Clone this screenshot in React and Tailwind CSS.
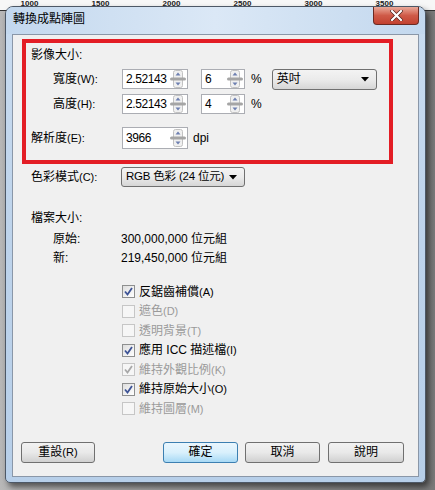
import React from 'react';

const FONT = "font-[family-name:'Liberation_Sans','Noto_Sans_CJK_TC',sans-serif]";

function Spinner() {
  return (
    <svg width="16" height="18" viewBox="0 0 16 18" className="shrink-0">
      <rect x="3.5" y="0.5" width="9" height="17" rx="2" fill="#f0f0f0" stroke="#c2c2c2" />
      <rect x="0" y="7.5" width="16" height="3" rx="1.5" fill="#a5a5a5" />
      <path d="M8 2.5 L10.5 5.5 H5.5 Z" fill="#6d7fb0" />
      <path d="M8 15.5 L10.5 12.5 H5.5 Z" fill="#6d7fb0" />
    </svg>
  );
}

function NumBox({ value, width }) {
  return (
    <div className={`flex items-center justify-between bg-white border border-[#abadb3] h-full pl-[3px] pr-[1px] ${width}`}>
      <span className="text-[12px] tracking-[-0.4px] leading-none text-black">{value}</span>
      <Spinner />
    </div>
  );
}

function DropDown({ value, width, tight }) {
  return (
    <div className={`flex items-center justify-between h-full border border-[#707070] rounded-[3px] bg-gradient-to-b from-[#f3f3f3] via-[#ebebeb] to-[#d6d6d6] pl-[4px] pr-[7px] ${width}`}>
      <span className={`leading-none text-black whitespace-nowrap ${tight ? 'text-[11.5px] tracking-[-0.2px]' : 'text-[12px]'}`}>{value}</span>
      <svg width="8" height="5" viewBox="0 0 8 5" className="shrink-0 ml-[4px]"><path d="M0 0 H8 L4 4.5 Z" fill="#000" /></svg>
    </div>
  );
}

function Check({ checked, disabled, label, hot }) {
  return (
    <div className="flex items-center h-[19.5px]">
      <div className={`w-[13px] h-[13px] border flex items-center justify-center ${disabled ? 'border-[#c6c6c6] bg-[#f6f6f6]' : 'border-[#8e8f8f] bg-gradient-to-br from-[#dedede] to-white'}`}>
        {checked && (
          <svg width="11" height="11" viewBox="0 0 11 11">
            <path d="M2 5.5 L4.5 8.5 L9 2" fill="none" stroke={disabled ? '#a8a8a8' : '#3d5396'} strokeWidth="1.8" />
          </svg>
        )}
      </div>
      <span className={`ml-[4px] text-[12px] leading-none ${disabled ? 'text-[#9a9a9a]' : 'text-black'}`}>
        {label}<span className="text-[11px]">{hot}</span>
      </span>
    </div>
  );
}

function Btn({ children, primary, width }) {
  return (
    <div className={`h-[21px] flex items-center justify-center rounded-[3px] border text-[12px] leading-none text-black ${width} ${primary ? 'border-[#3c7fb1] bg-gradient-to-b from-[#eaf6fd] via-[#d9f0fc] to-[#a7d9f5]' : 'border-[#707070] bg-gradient-to-b from-[#f2f2f2] via-[#e9e9e9] to-[#d0d0d0]'}`}>
      {children}
    </div>
  );
}

export default function App() {
  const ruler = ['1000', '1500', '2000', '2500', '3000', '3500'];
  const checks = [
    { label: '反鋸齒補償', hot: '(A)', checked: true },
    { label: '遮色', hot: '(D)', disabled: true },
    { label: '透明背景', hot: '(T)', disabled: true },
    { label: '應用 ICC 描述檔', hot: '(I)', checked: true },
    { label: '維持外觀比例', hot: '(K)', checked: true, disabled: true },
    { label: '維持原始大小', hot: '(O)', checked: true },
    { label: '維持圖層', hot: '(M)', disabled: true },
  ];

  return (
    <div className={`w-[435px] h-[490px] overflow-hidden bg-gradient-to-r from-[#b8b8b8] via-[#9a9a9a] to-[#7a7a7a] ${FONT}`}>
      {/* ruler behind the dialog */}
      <div className="h-[11px] bg-[#f7f7f7] border-b border-[#333] overflow-hidden flex">
        {ruler.map((r) => (
          <div key={r} className="w-[71px] shrink-0 first:ml-[-6px] text-center text-[8px] leading-none font-bold text-[#222]">
            {r}
          </div>
        ))}
      </div>

      {/* dialog window */}
      <div className="ml-[5px] mt-[-5px] w-[421px] h-[477px] rounded-t-[8px] rounded-b-[5px] border border-[#4d5866] bg-gradient-to-b from-[#c9dcf0] via-[#bdd3eb] to-[#b7cfe9] shadow-[3px_4px_6px_rgba(0,0,0,0.55)] flex flex-col">
        <div className="h-[27px] flex items-start justify-between pl-[7px] pr-[6px] rounded-t-[7px] bg-gradient-to-r from-[#c3d8ee] via-[#dbe8f6] to-[#c3d8ee]">
          <span className="mt-[6px] text-[12px] leading-none text-black">轉換成點陣圖</span>
          <div className="w-[46px] h-[18px] rounded-b-[4px] border border-t-0 border-[#6b2a22] bg-gradient-to-b from-[#e9a99a] via-[#cf5a48] to-[#c2412f] flex items-center justify-center">
            <svg width="13" height="11" viewBox="0 0 13 11">
              <path d="M2 1 L11 10 M11 1 L2 10" stroke="#4a1a14" strokeWidth="3.4" strokeLinecap="square" />
              <path d="M2 1 L11 10 M11 1 L2 10" stroke="#ffffff" strokeWidth="2.2" strokeLinecap="square" />
            </svg>
          </div>
        </div>

        {/* client area */}
        <div className="mx-[6px] h-[443px] border border-[#8a97a8] bg-[#f0f0f0] flex flex-col text-black">
          {/* red highlighted group */}
          <div className="ml-[9px] mt-[4px] w-[371px] h-[125px] border-[4px] border-[#e31d25] flex flex-col">
            <div className="mt-[2px] h-[20px] flex items-center pl-[5px] text-[12px] leading-none">影像大小:</div>
            <div className="mt-[4px] h-[20px] flex items-center pl-[27px]">
              <span className="w-[69px] text-[12px] leading-none">寬度<span className="text-[11px]">(W):</span></span>
              <NumBox value="2.52143" width="w-[66px]" />
              <div className="ml-[13px] h-full"><NumBox value="6" width="w-[44px]" /></div>
              <span className="ml-[6px] text-[12px] leading-none">%</span>
              <div className="ml-[10px] h-[21px]"><DropDown value="英吋" width="w-[105px]" /></div>
            </div>
            <div className="mt-[5px] h-[20px] flex items-center pl-[27px]">
              <span className="w-[69px] text-[12px] leading-none">高度<span className="text-[11px]">(H):</span></span>
              <NumBox value="2.52143" width="w-[66px]" />
              <div className="ml-[13px] h-full"><NumBox value="4" width="w-[44px]" /></div>
              <span className="ml-[6px] text-[12px] leading-none">%</span>
            </div>
            <div className="mt-[13px] h-[22px] flex items-center pl-[5px]">
              <span className="w-[91px] text-[12px] leading-none">解析度<span className="text-[11px]">(E):</span></span>
              <NumBox value="3966" width="w-[66px]" />
              <span className="ml-[5px] text-[12px] leading-none">dpi</span>
            </div>
          </div>

          <div className="mt-[3px] h-[20px] flex items-center pl-[18px]">
            <span className="w-[90px] text-[12px] leading-none">色彩模式<span className="text-[11px]">(C):</span></span>
            <DropDown value="RGB 色彩 (24 位元)" width="w-[124px]" tight />
          </div>

          <div className="mt-[23px] h-[16px] flex items-center pl-[18px] text-[12px] leading-none">檔案大小:</div>
          <div className="mt-[5px] h-[16px] flex items-center pl-[40px] text-[12px] leading-none">
            <span className="w-[68px]">原始:</span>
            <span>300,000,000 位元組</span>
          </div>
          <div className="mt-[3px] h-[16px] flex items-center pl-[40px] text-[12px] leading-none">
            <span className="w-[68px]">新:</span>
            <span>219,450,000 位元組</span>
          </div>

          <div className="mt-[16px] pl-[109px] flex flex-col">
            {checks.map((c) => (
              <Check key={c.label} {...c} />
            ))}
          </div>

          <div className="mt-[23px] flex items-center pl-[8px]">
            <Btn width="w-[74px]">重設<span className="text-[11px]">(R)</span></Btn>
            <div className="ml-[68px]"><Btn primary width="w-[75px]">確定</Btn></div>
            <div className="ml-[7px]"><Btn width="w-[75px]">取消</Btn></div>
            <div className="ml-[8px]"><Btn width="w-[76px]">說明</Btn></div>
          </div>
        </div>
      </div>
    </div>
  );
}
